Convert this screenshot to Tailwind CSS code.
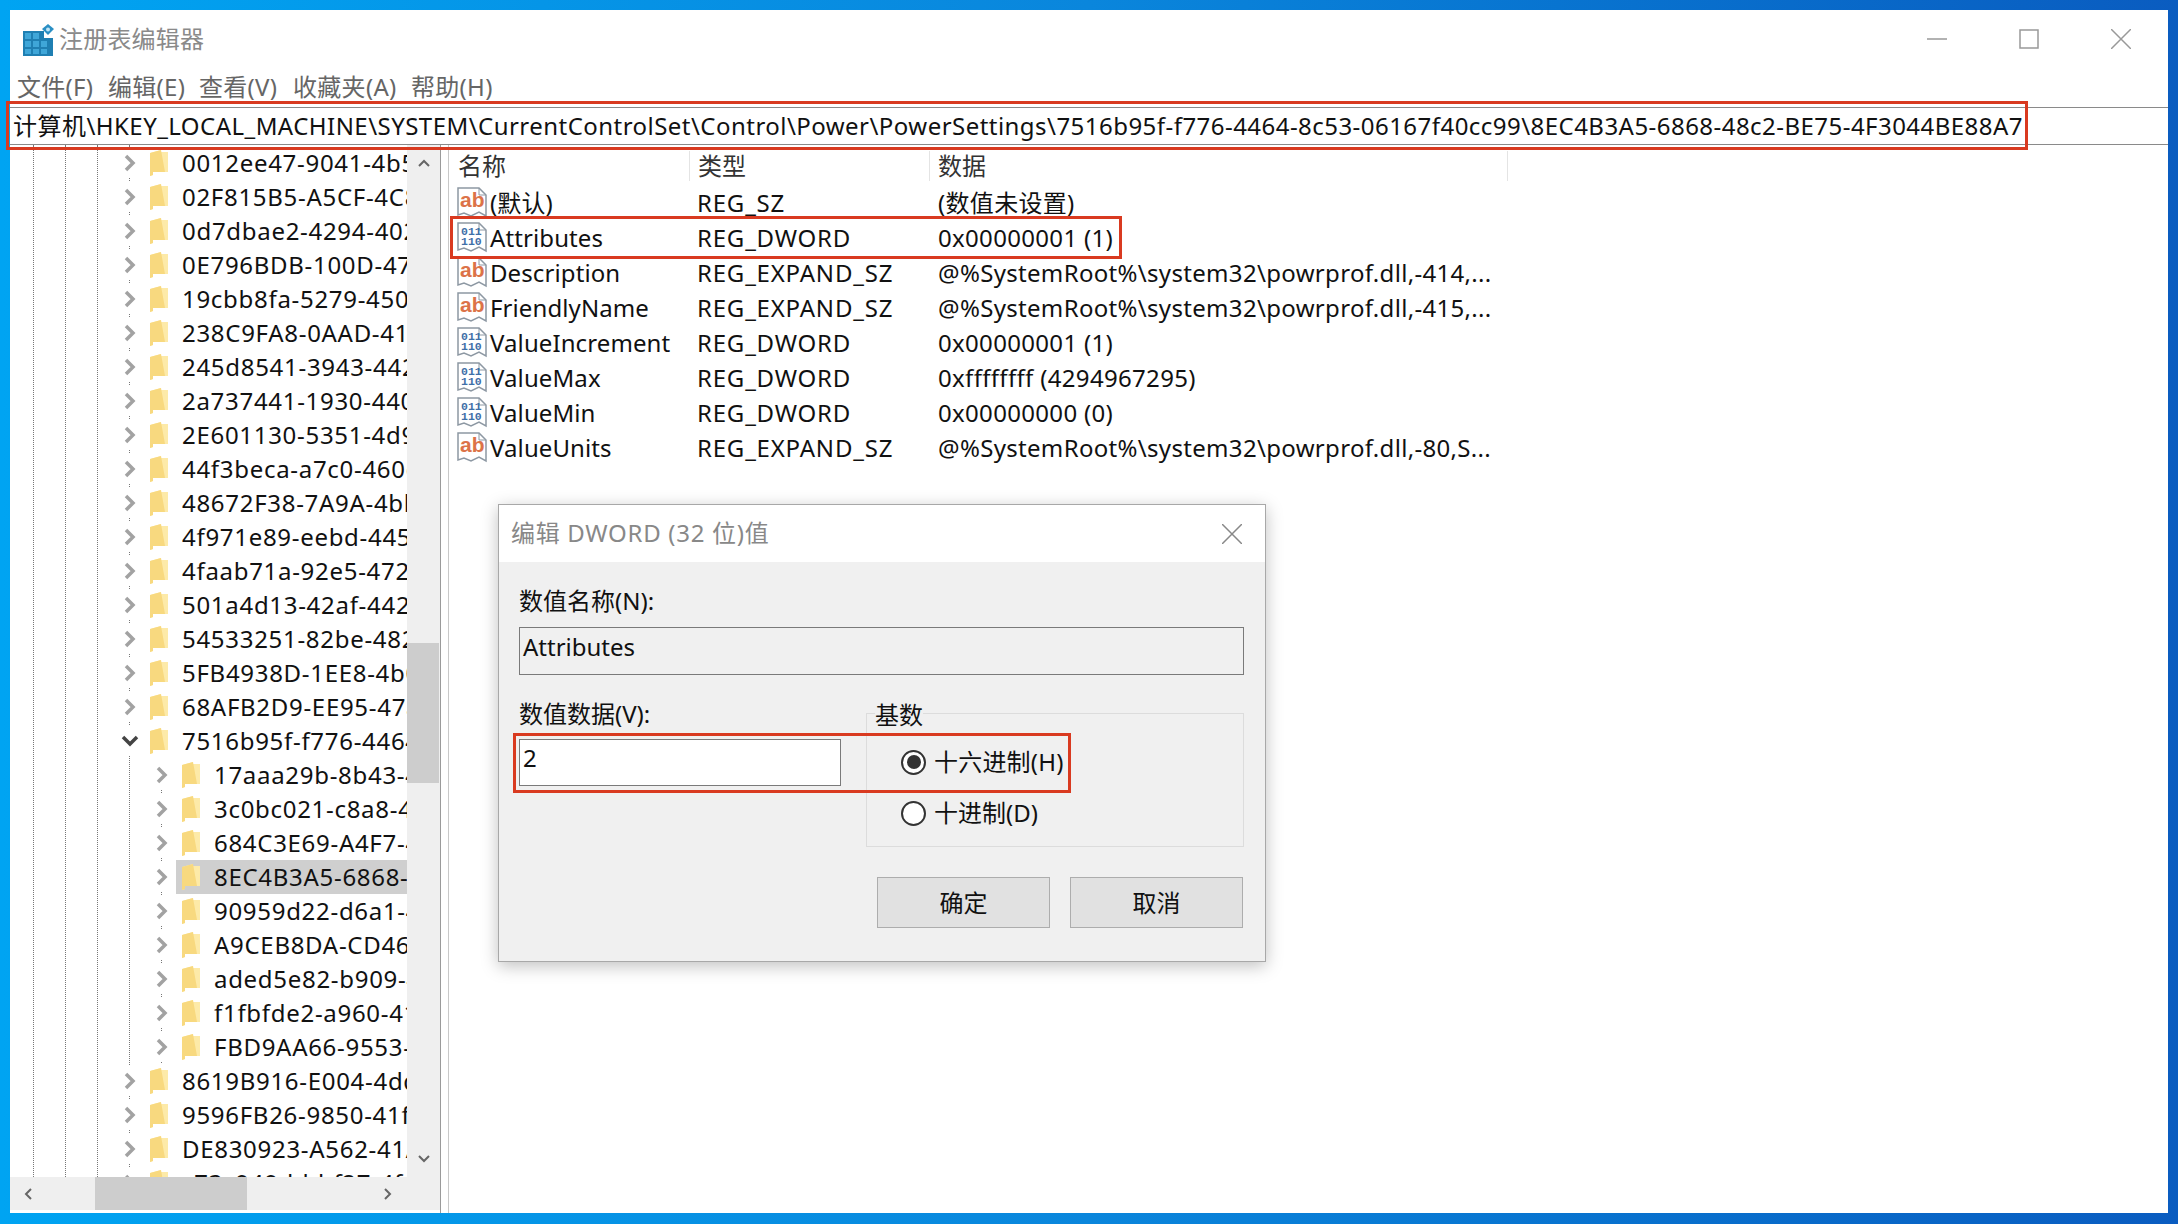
<!DOCTYPE html>
<html lang="zh-CN">
<head>
  <meta charset="UTF-8" />
  <title>注册表编辑器</title>
  <script src="https://cdn.jsdelivr.net/npm/@tailwindcss/browser@4"></script>
</head>
<body class="relative w-[2178px] h-[1224px] overflow-hidden bg-gradient-to-r from-[#00a4f2] via-[#0a86dc] to-[#0a5cc0] pt-[10px] pl-[10px] font-['Noto_Sans','Noto_Sans_CJK_SC',sans-serif] text-[24px] leading-[30px] text-[#111]">

  <svg class="hidden">
    <symbol id="folder" viewBox="0 0 18 26">
      <path d="M0 3 L11 0 L11 2 L18 2 L18 22 L3 22 L3 25 L0 26 Z" fill="#fdeaa8" />
      <path d="M0 3 L11 0 L15 22 L3 22 L3 25 L0 26 Z" fill="#f8d97f" />
    </symbol>
    <symbol id="ab" viewBox="0 0 30 33">
      <path d="M1 2 H22 L29 9 V30 L22 26 L14 30 L7 27 L1 29 Z" fill="#fff" stroke="#8d98a3" stroke-width="1.5" />
      <path d="M22 2 V9 H29" fill="none" stroke="#8d98a3" stroke-width="1" />
      <text x="3" y="21" font-size="21" font-weight="700" fill="#dc7348" font-family="Liberation Sans, sans-serif">ab</text>
    </symbol>
    <symbol id="bin" viewBox="0 0 30 33">
      <path d="M1 2 H22 L29 9 V30 L22 26 L14 30 L7 27 L1 29 Z" fill="#fff" stroke="#8d98a3" stroke-width="1.5" />
      <path d="M22 2 V9 H29" fill="none" stroke="#8d98a3" stroke-width="1" />
      <text x="4" y="14" font-size="11.5" font-weight="700" fill="#3f6fa8" font-family="Liberation Mono, monospace">011</text>
      <text x="4" y="24" font-size="11.5" font-weight="700" fill="#3f6fa8" font-family="Liberation Mono, monospace">110</text>
    </symbol>
  </svg>

  <div class="w-[2158px] h-[1203px] bg-white flex flex-col">
    <!-- title bar -->
    <div class="h-[58px] flex items-center shrink-0">
      <svg class="ml-[13px] w-[31px] h-[32px] mt-[1px]" viewBox="0 0 31 32">
        <path d="M0 7 H21 V14 H30 V32 H0 Z" fill="#1f7fb2" />
        <path d="M2 9h6v6H2zM10 9h6v6h-6zM2 17h6v6H2zM10 17h6v6h-6zM18 17h6v6h-6zM2 25h6v5H2zM10 25h6v5h-6zM18 25h6v5h-6z" fill="#3fa6d8" />
        <path d="M25 0 L31 5 L25 11 L19 5 Z" fill="#2a8fc4" />
        <circle cx="25" cy="5.500" r="2" fill="#bfe4f5" />
      </svg>
      <span class="ml-[5px] text-[#8a8a8a] tracking-[0.2px]">注册表编辑器</span>
      <div class="ml-auto flex items-center mr-[37px] gap-[72px]">
        <svg class="w-[20px] h-[20px]" viewBox="0 0 20 20"><path d="M0 10H20" stroke="#999" stroke-width="1.500" /></svg>
        <svg class="w-[20px] h-[20px]" viewBox="0 0 20 20"><rect x="1" y="1" width="18" height="18" fill="none" stroke="#999" stroke-width="1.500" /></svg>
        <svg class="w-[20px] h-[20px]" viewBox="0 0 20 20"><path d="M0 0L20 20M20 0L0 20" stroke="#999" stroke-width="1.500" /></svg>
      </div>
    </div>

    <!-- menu -->
    <div class="h-[37px] mb-[2px] flex items-center text-[#666] shrink-0 pl-[7px] tracking-[0.3px]">
      <span class="w-[91px]">文件(F)</span>
      <span class="w-[91px]">编辑(E)</span>
      <span class="w-[94px]">查看(V)</span>
      <span class="w-[118px]">收藏夹(A)</span>
      <span>帮助(H)</span>
    </div>

    <!-- address bar -->
    <div class="h-[38px] shrink-0 border-y border-[#8a8a8a] flex items-center pl-[3px] whitespace-nowrap overflow-hidden text-[#111] tracking-[0.46px]">计算机\HKEY_LOCAL_MACHINE\SYSTEM\CurrentControlSet\Control\Power\PowerSettings\7516b95f-f776-4464-8c53-06167f40cc99\8EC4B3A5-6868-48c2-BE75-4F3044BE88A7</div>

    <div class="flex flex-1 min-h-0">
      <!-- key tree -->
      <div class="w-[431px] shrink-0 flex flex-col border-r border-[#9a9a9a]">
        <div class="flex flex-1 min-h-0">
          <div class="relative w-[397px] overflow-hidden">
            <div class="absolute top-0 bottom-0 left-[23px] border-l border-dotted border-[#777]"></div>
            <div class="absolute top-0 bottom-0 left-[55px] border-l border-dotted border-[#777]"></div>
            <div class="absolute top-0 bottom-0 left-[87px] border-l border-dotted border-[#777]"></div>
            <div class="absolute top-0 bottom-0 left-[119px] border-l border-dotted border-[#777]"></div>
            <div class="absolute top-[640px] h-[306px] left-[151px] border-l border-dotted border-[#777]"></div>
            <div id="tree" class="relative pt-[1px]"></div>
          </div>
          <div class="relative w-[33px] bg-[#efefef]">
            <svg class="absolute left-[11px] top-[14px] w-[12px] h-[8px]" viewBox="0 0 12 8"><path d="M1 7L6 2L11 7" fill="none" stroke="#666" stroke-width="2" /></svg>
            <div class="mt-[498px] h-[140px] w-[32px] bg-[#cdcdcd]"></div>
            <svg class="absolute left-[11px] bottom-[14px] w-[12px] h-[8px]" viewBox="0 0 12 8"><path d="M1 1L6 6L11 1" fill="none" stroke="#666" stroke-width="2" /></svg>
          </div>
        </div>
        <div class="h-[33px] shrink-0 mb-[3px] bg-[#efefef] relative">
          <div class="ml-[85px] w-[152px] h-full bg-[#cdcdcd]"></div>
          <svg class="absolute left-[14px] top-[11px] w-[8px] h-[12px]" viewBox="0 0 8 12"><path d="M7 1L2 6L7 11" fill="none" stroke="#666" stroke-width="2" /></svg>
          <svg class="absolute left-[374px] top-[11px] w-[8px] h-[12px]" viewBox="0 0 8 12"><path d="M1 1L6 6L1 11" fill="none" stroke="#666" stroke-width="2" /></svg>
        </div>
      </div>
      <div class="w-[8px] shrink-0 border-r border-[#c8c8c8]"></div>

      <!-- value list -->
      <div class="flex-1">
        <div class="h-[38px] pt-[3px] flex items-center pl-[9px] text-[#333]">
          <span class="w-[232px] border-r border-[#e4e4e4]">名称</span>
          <span class="w-[240px] pl-[8px] border-r border-[#e4e4e4]">类型</span>
          <span class="w-[578px] pl-[8px] border-r border-[#e4e4e4]">数据</span>
        </div>
        <div id="values" class="pt-[2px]"></div>
      </div>
    </div>
  </div>

  <!-- edit dialog -->
  <div class="absolute left-[498px] top-[504px] w-[768px] h-[458px] bg-[#f0f0f0] border border-[#a8a8a8] shadow-[0_4px_16px_rgba(0,0,0,0.25)]">
    <div class="h-[57px] bg-white flex items-center justify-between pl-[12px] pr-[23px] text-[#888]">
      <span class="tracking-[0.7px] -mt-[1px]">编辑 DWORD (32 位)值</span>
      <svg class="w-[20px] h-[20px]" viewBox="0 0 20 20"><path d="M0 0L20 20M20 0L0 20" stroke="#888" stroke-width="1.500" /></svg>
    </div>
    <div class="pl-[20px] pr-[21px]">
      <div class="mt-[24px] mb-[1px]">数值名称(N):</div>
      <div class="mt-[11px] h-[48px] border border-[#7a7a7a] pl-[3px] leading-[37px]">Attributes</div>
      <div class="mt-[25px] flex gap-[25px]">
        <div class="w-[322px]">
          <div class="-mt-[1px] mb-[1px]">数值数据(V):</div>
          <div class="mt-[10px] h-[47px] border border-[#7a7a7a] bg-white pl-[3px] leading-[36px]">2</div>
        </div>
        <div class="relative flex-1 mt-[13px] h-[134px] border border-[#dcdcdc] pl-[34px] pt-[33px]">
          <span class="absolute left-[8px] top-[-14px] bg-[#f0f0f0]">基数</span>
          <label class="flex items-center h-[30px] gap-[8px]">
            <span class="w-[25px] h-[25px] rounded-full border-2 border-[#333] bg-white flex items-center justify-center"><span class="w-[14px] h-[14px] rounded-full bg-[#333]"></span></span>
            <span class="tracking-[0.2px]">十六进制(H)</span>
          </label>
          <label class="flex items-center h-[30px] gap-[8px] mt-[21px]">
            <span class="w-[25px] h-[25px] rounded-full border-2 border-[#333] bg-white"></span>
            十进制(D)
          </label>
        </div>
      </div>
      <div class="mt-[30px] flex justify-end gap-[20px] mr-[1px]">
        <button class="w-[173px] h-[51px] bg-[#e1e1e1] border border-[#adadad]">确定</button>
        <button class="w-[173px] h-[51px] bg-[#e1e1e1] border border-[#adadad]">取消</button>
      </div>
    </div>
    <div class="absolute left-[14px] top-[228px] w-[558px] h-[60px] border-[3px] border-[#d93a20]"></div>
  </div>

  <!-- red callouts -->
  <div class="absolute left-[6px] top-[101px] w-[2022px] h-[49px] border-[3px] border-[#d93a20]"></div>
  <div class="absolute left-[450px] top-[216px] w-[672px] h-[43px] border-[3px] border-[#d93a20]"></div>

  <script>
    const treeRows = [
      ['0012ee47-9041-4b5d', 0], ['02F815B5-A5CF-4C84', 0], ['0d7dbae2-4294-402a', 0], ['0E796BDB-100D-47D6', 0],
      ['19cbb8fa-5279-450e', 0], ['238C9FA8-0AAD-41ED', 0], ['245d8541-3943-4422', 0], ['2a737441-1930-4402', 0],
      ['2E601130-5351-4d9d', 0], ['44f3beca-a7c0-460e', 0], ['48672F38-7A9A-4bb8', 0], ['4f971e89-eebd-4455', 0],
      ['4faab71a-92e5-4726', 0], ['501a4d13-42af-4429', 0], ['54533251-82be-4824', 0], ['5FB4938D-1EE8-4b0f', 0],
      ['68AFB2D9-EE95-47a8', 0], ['7516b95f-f776-4464', 0, 'open'],
      ['17aaa29b-8b43-4b94', 1], ['3c0bc021-c8a8-4e07', 1], ['684C3E69-A4F7-4014', 1], ['8EC4B3A5-6868-48c2', 1, 'sel'],
      ['90959d22-d6a1-49b9', 1], ['A9CEB8DA-CD46-44FB', 1], ['aded5e82-b909-4619', 1], ['f1fbfde2-a960-4165', 1], ['FBD9AA66-9553-4097', 1],
      ['8619B916-E004-4dd8', 0], ['9596FB26-9850-41fd', 0], ['DE830923-A562-41AF', 0], ['c73c949d-bbf27-4f11', 0]
    ];

    document.getElementById('tree').innerHTML = treeRows.map(([name, depth, state]) => {
      const chevron = state === 'open'
        ? '<span class="shrink-0 w-[22px] h-[30px] bg-white flex items-center justify-center"><svg class="w-[18px] h-[12px]" viewBox="0 0 18 12"><path d="M2 2L9 9L16 2" fill="none" stroke="#444" stroke-width="3.500" /></svg></span>'
        : '<span class="shrink-0 w-[22px] h-[30px] bg-white flex items-center justify-center"><svg class="w-[12px] h-[18px]" viewBox="0 0 12 18"><path d="M2 2L9 9L2 16" fill="none" stroke="#a2a2a2" stroke-width="3.500" /></svg></span>';
      const indent = depth ? 'pl-[141px]' : 'pl-[109px]';
      const rowBg = state === 'sel' ? 'bg-[#cfcfcf]' : 'bg-white';
      return `
        <div class="h-[34px] flex items-center whitespace-nowrap w-[397px] ${indent}">
          ${chevron}
          <div class="flex items-center h-full ml-[3px] flex-1 min-w-0 pl-[6px] ${rowBg}">
            <svg class="w-[18px] h-[26px] shrink-0"><use href="#folder" /></svg>
            <span class="ml-[14px] text-[#111] tracking-[0.7px]">${name}</span>
          </div>
        </div>`;
    }).join('');

    const valueRows = [
      ['ab', '(默认)', 'REG_SZ', '(数值未设置)'],
      ['bin', 'Attributes', 'REG_DWORD', '0x00000001 (1)'],
      ['ab', 'Description', 'REG_EXPAND_SZ', '@%SystemRoot%\\system32\\powrprof.dll,-414,...'],
      ['ab', 'FriendlyName', 'REG_EXPAND_SZ', '@%SystemRoot%\\system32\\powrprof.dll,-415,...'],
      ['bin', 'ValueIncrement', 'REG_DWORD', '0x00000001 (1)'],
      ['bin', 'ValueMax', 'REG_DWORD', '0xffffffff (4294967295)'],
      ['bin', 'ValueMin', 'REG_DWORD', '0x00000000 (0)'],
      ['ab', 'ValueUnits', 'REG_EXPAND_SZ', '@%SystemRoot%\\system32\\powrprof.dll,-80,S...']
    ];

    document.getElementById('values').innerHTML = valueRows.map(([icon, name, type, data]) => `
      <div class="h-[35px] flex items-center whitespace-nowrap pl-[8px]">
        <svg class="w-[30px] h-[33px] shrink-0"><use href="#${icon}" /></svg>
        <span class="w-[207px] ml-[3px] tracking-[0.1px]">${name}</span>
        <span class="w-[241px] tracking-[0.8px]">${type}</span>
        <span class="tracking-[0.32px]">${data}</span>
      </div>`).join('');
  </script>
</body>
</html>
